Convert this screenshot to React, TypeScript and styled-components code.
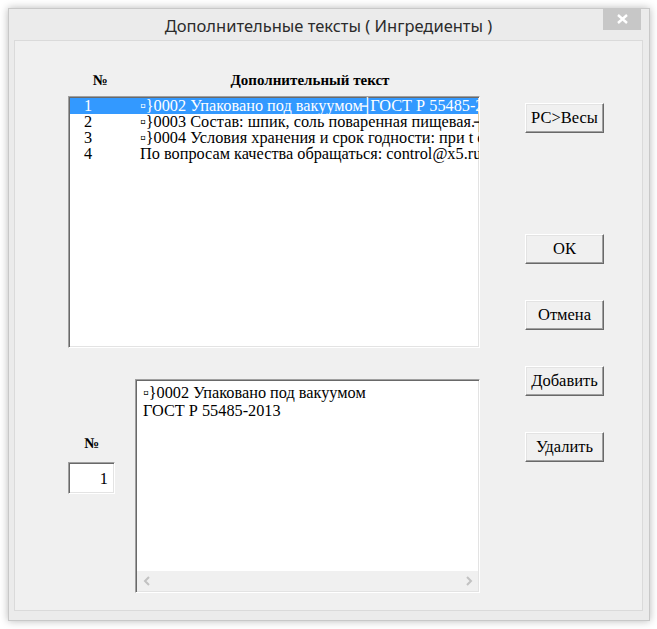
import React from "react";
import styled, { createGlobalStyle } from "styled-components";

const GlobalStyle = createGlobalStyle`
  html, body {
    margin: 0;
    padding: 0;
    background: #ffffff;
  }
  * {
    box-sizing: border-box;
  }
`;

const Desktop = styled.div`
  width: 657px;
  height: 629px;
  padding: 8px 0 0 8px;
`;

const Window = styled.div`
  width: 642px;
  height: 613px;
  background: #ebebeb;
  border: 1px solid #c8c8c8;
  box-shadow: 0 0 8px rgba(0, 0, 0, 0.28);
  display: flex;
  flex-direction: column;
  padding: 0 6px 9px 5px;
`;

const TitleBar = styled.div`
  position: relative;
  height: 31px;
  display: flex;
  align-items: center;
  justify-content: center;
  font-family: "Noto Sans", "Open Sans", sans-serif;
  font-size: 16.5px;
  color: #2b2b2b;
  padding-top: 2px;
`;

const CloseButton = styled.div`
  position: absolute;
  top: -1px;
  right: 2px;
  width: 38px;
  height: 22px;
  background: #c7c7c7;
  display: flex;
  align-items: center;
  justify-content: center;
`;

const Client = styled.div`
  flex: 1;
  background: #f0f0f0;
  border: 1px solid #dadada;
  display: flex;
  padding: 27px 0 0 53px;
  gap: 45px;
  font-family: "Liberation Serif", "Times New Roman", serif;
  color: #000;
`;

const LeftColumn = styled.div`
  width: 412px;
  display: flex;
  flex-direction: column;
`;

const HeaderRow = styled.div`
  height: 28px;
  display: flex;
  align-items: center;
  font-weight: bold;
  font-size: 15px;
  padding-bottom: 3px;
`;

const HeaderCell = styled.div<{ $w: number }>`
  width: ${(p) => p.$w}px;
  flex-shrink: 0;
  text-align: center;
`;

const Sunken = styled.div<{ $w: number; $h: number }>`
  width: ${(p) => p.$w}px;
  height: ${(p) => p.$h}px;
  background: #ffffff;
  border: 1px solid;
  border-color: #a0a0a0 #ffffff #ffffff #a0a0a0;
  box-shadow: inset 1px 1px 0 #696969, inset -1px -1px 0 #e3e3e3;
  overflow: hidden;
  padding: 1px;
  display: flex;
  flex-direction: column;
`;

const Row = styled.div<{ $selected?: boolean }>`
  height: 16px;
  line-height: 16px;
  display: flex;
  align-items: center;
  white-space: nowrap;
  font-size: 16.3px;
  background: ${(p) => (p.$selected ? "#3399ff" : "transparent")};
  color: ${(p) => (p.$selected ? "#ffffff" : "#000000")};
`;

const NumCell = styled.div`
  width: 70px;
  padding-left: 14px;
  flex-shrink: 0;
`;

const TextCell = styled.div`
  flex-shrink: 0;
`;

const Sep = styled.span`
  display: inline-block;
  margin: 0 -3px 0 -1px;
`;

const BottomSection = styled.div`
  margin-top: 31px;
  display: flex;
`;

const NumberColumn = styled.div`
  width: 67px;
  display: flex;
  flex-direction: column;
`;

const NumLabel = styled.div`
  margin-top: 54px;
  width: 47px;
  text-align: center;
  font-size: 15px;
  font-weight: bold;
  height: 20px;
  line-height: 20px;
`;

const NumInput = styled.div`
  margin-top: 9px;
  width: 47px;
  height: 32px;
  background: #ffffff;
  border: 1px solid;
  border-color: #a0a0a0 #ffffff #ffffff #a0a0a0;
  box-shadow: inset 1px 1px 0 #696969, inset -1px -1px 0 #e3e3e3;
  font-size: 16.3px;
  text-align: right;
  padding: 6px 6px 0 0;
`;

const EditText = styled.div`
  flex: 1;
  padding: 3px 0 0 6px;
  font-size: 16.3px;
  line-height: 18px;
  white-space: pre;
`;

const HScroll = styled.div`
  height: 20px;
  background: #f0f0f0;
  display: flex;
  align-items: center;
  justify-content: space-between;
  padding: 0 5px 0 6px;
`;

const ButtonColumn = styled.div`
  width: 79px;
  display: flex;
  flex-direction: column;
  padding-top: 35px;
`;

const Button = styled.div<{ $gap: number }>`
  margin-top: ${(p) => p.$gap}px;
  height: 30px;
  background: #f0f0f0;
  border: 1px solid;
  border-color: #ffffff #696969 #696969 #ffffff;
  box-shadow: inset -1px -1px 0 #a0a0a0, inset 1px 1px 0 #e3e3e3;
  display: flex;
  align-items: center;
  justify-content: center;
  font-size: 16.5px;
  white-space: nowrap;
  color: #000;
`;

const Chevron = ({ dir }: { dir: "left" | "right" }) => (
  <svg width="8" height="10" viewBox="0 0 8 10">
    <path
      d={dir === "left" ? "M6 1 L2 5 L6 9" : "M2 1 L6 5 L2 9"}
      fill="none"
      stroke="#c2c2c2"
      strokeWidth="2"
    />
  </svg>
);

const rows: [string, string][] = [
  ["\u25AB}0002 Упаковано под вакуумом", "ГОСТ Р 55485-2013"],
  ["\u25AB}0003 Состав: шпик, соль поваренная пищевая.", ""],
  ["\u25AB}0004 Условия хранения и срок годности: при t от 0 до +6", ""],
  ["По вопросам качества обращаться: control@x5.ru", ""],
];

const buttons = [
  { label: "РС>Весы", gap: 0 },
  { label: "ОК", gap: 101 },
  { label: "Отмена", gap: 36 },
  { label: "Добавить", gap: 36 },
  { label: "Удалить", gap: 36 },
];

export default function App() {
  return (
    <Desktop>
      <GlobalStyle />
      <Window>
        <TitleBar>
          Дополнительные тексты ( Ингредиенты )
          <CloseButton>
            <svg width="11" height="10" viewBox="0 0 11 10">
              <path d="M1 1 L10 9 M10 1 L1 9" stroke="#ffffff" strokeWidth="2.4" />
            </svg>
          </CloseButton>
        </TitleBar>
        <Client>
          <LeftColumn>
            <HeaderRow>
              <HeaderCell $w={64}>№</HeaderCell>
              <HeaderCell $w={356}>Дополнительный текст</HeaderCell>
            </HeaderRow>
            <Sunken $w={412} $h={252}>
              {rows.map(([a, b], i) => (
                <Row key={i} $selected={i === 0}>
                  <NumCell>{i + 1}</NumCell>
                  <TextCell>
                    {a}
                    {i < 2 && <Sep>{"\u2524"}</Sep>}
                    {b}
                  </TextCell>
                </Row>
              ))}
            </Sunken>
            <BottomSection>
              <NumberColumn>
                <NumLabel>№</NumLabel>
                <NumInput>1</NumInput>
              </NumberColumn>
              <Sunken $w={345} $h={214}>
                <EditText>{"\u25AB}0002 Упаковано под вакуумом\nГОСТ Р 55485-2013"}</EditText>
                <HScroll>
                  <Chevron dir="left" />
                  <Chevron dir="right" />
                </HScroll>
              </Sunken>
            </BottomSection>
          </LeftColumn>
          <ButtonColumn>
            {buttons.map((b) => (
              <Button key={b.label} $gap={b.gap}>
                {b.label}
              </Button>
            ))}
          </ButtonColumn>
        </Client>
      </Window>
    </Desktop>
  );
}
